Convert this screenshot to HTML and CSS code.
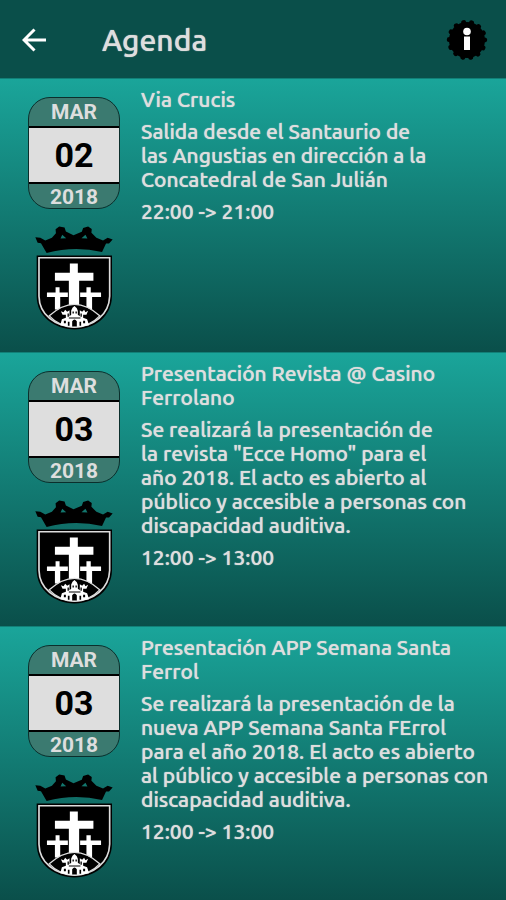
FILE: index.html
```html
<!DOCTYPE html>
<html lang="es">

<head>
    <meta charset="UTF-8">
    <meta name="viewport" content="width=device-width, initial-scale=1.0">
    <title>Agenda</title>
    <link rel="stylesheet" href="styles.css">
</head>

<body>

    <!-- escudo compartido por todos los eventos -->
    <svg class="sprite" aria-hidden="true">
        <symbol id="escudo" viewBox="45 33 235 312">
            <path d="M46 66 L61 68 L76 76 L96 68 L108 54 L107 42 L118 34 L134 37 L138 49 L161 60 L186 50 L190 38 L205 34 L216 41 L215 53 L230 68 L250 76 L264 68 L279 73 L268 85 L259 85 L247 111 Q164 91 80 114 L63 84 L53 83 Z" />
            <path d="M122 70 L127 59 L139 69 Z M185 69 L197 59 L203 70 Z" fill="#12766d" />
            <path d="M50 121 H277 V245 C275 306 225 343 164 344 C102 343 51 305 50 245 Z" />
            <path d="M57 128 H270 V244 C268 300 222 335 164 337 C106 335 58 300 57 244 Z" fill="none" stroke="#ddd" stroke-width="5" />
            <path d="M150 145 H174 V173 H221 V197 H178 V290 H147 V197 H105 V173 H150 Z" fill="#fff" />
            <path d="M107 217 H119 V233 H144 V246 H121 V284 H105 V246 H81 V233 H107 Z M200 217 H213 V233 H244 V246 H217 V284 H200 V246 H181 V233 H200 Z" fill="#fff" />
            <path d="M88 303 Q164 234 240 303 Q210 335 164 337 Q118 335 88 303 Z" stroke="#ddd" stroke-width="4" />
            <path d="M121 331 L126 313 L138 309 V300 H128 L123 289 L131 292 L136 285 L142 291 L149 286 L149 304 L154 300 V287 L158 279 L164 273 L171 280 L174 288 V300 L180 304 V286 L187 291 L193 285 L197 292 L205 288 L200 300 H190 V309 L202 313 L208 331 Q164 342 121 331 Z" fill="#fff" />
            <path d="M157 335 V319 Q164 309 171 319 V335 Z M158 290 H162 V296 H158 Z M167 290 H171 V296 H167 Z M143 296 H147 V306 H143 Z M182 296 H186 V306 H182 Z M132 318 H138 V325 H132 Z M190 318 H196 V325 H190 Z M147 308 H182 V311 H147 Z M144 321 H149 V333 H144 Z M179 321 H184 V333 H179 Z" />
        </symbol>
    </svg>

    <header class="topbar">
        <button type="button" class="icon-btn" aria-label="Volver">
            <svg width="24" height="24" viewBox="0 0 24 24" fill="none" stroke="#fff" stroke-width="3">
                <path d="M12.5 1.5 L2 12 L12.5 22.5 M2 12 H24" />
            </svg>
        </button>
        <h1>Agenda</h1>
        <button type="button" class="icon-btn" aria-label="Información">
            <svg width="42" height="42" viewBox="-21 -21 42 42">
                <circle r="18" />
                <circle r="17.7" fill="none" stroke="#000" stroke-width="5" stroke-linecap="round" stroke-dasharray="0.1 7.844" />
                <circle cy="-8.5" r="3.8" fill="#fff" />
                <path d="M-3 -3.5 H3 V10 H-3 Z" fill="#fff" />
            </svg>
        </button>
    </header>

    <main>
        <article class="event">
            <div class="side">
                <time class="calendar" datetime="2018-03-02">
                    <span class="month">MAR</span>
                    <span class="day">02</span>
                    <span class="year">2018</span>
                </time>
                <svg class="shield"><use href="#escudo" /></svg>
            </div>
            <div class="info">
                <h2>Via Crucis</h2>
                <p>Salida desde el Santaurio de<br>las Angustias en dirección a la<br>Concatedral de San Julián</p>
                <p class="hours">22:00 -&gt; 21:00</p>
            </div>
        </article>

        <article class="event">
            <div class="side">
                <time class="calendar" datetime="2018-03-03">
                    <span class="month">MAR</span>
                    <span class="day">03</span>
                    <span class="year">2018</span>
                </time>
                <svg class="shield"><use href="#escudo" /></svg>
            </div>
            <div class="info">
                <h2>Presentación Revista @ Casino<br>Ferrolano</h2>
                <p>Se realizará la presentación de<br>la revista "Ecce Homo" para el<br>año 2018. El acto es abierto al<br>público y accesible a personas con<br>discapacidad auditiva.</p>
                <p class="hours">12:00 -&gt; 13:00</p>
            </div>
        </article>

        <article class="event">
            <div class="side">
                <time class="calendar" datetime="2018-03-03">
                    <span class="month">MAR</span>
                    <span class="day">03</span>
                    <span class="year">2018</span>
                </time>
                <svg class="shield"><use href="#escudo" /></svg>
            </div>
            <div class="info">
                <h2>Presentación APP Semana Santa<br>Ferrol</h2>
                <p>Se realizará la presentación de la<br>nueva APP Semana Santa FErrol<br>para el año 2018. El acto es abierto<br>al público y accesible a personas con<br>discapacidad auditiva.</p>
                <p class="hours">12:00 -&gt; 13:00</p>
            </div>
        </article>
    </main>

</body>

</html>
```
FILE: styles.css
```css
* {
    margin: 0;
    padding: 0;
    box-sizing: border-box;
}

body {
    background: #0a4f4a;
    color: #dedede;
    font-family: Ubuntu, "Noto Sans", sans-serif;
}

.sprite {
    display: none;
}

.topbar {
    display: flex;
    align-items: center;
    height: 78px;
    padding: 2px 18px 0 22px;
    background: #0a4f4a;
}

.topbar h1 {
    flex: 1;
    margin-left: 56px;
    font-size: 30px;
    font-weight: 500;
    line-height: 40px;
    text-shadow: 0 0 1px #dedede;
}

.icon-btn {
    display: flex;
    border: none;
    background: none;
    cursor: pointer;
}

.event {
    display: flex;
    gap: 21px;
    padding: 8px 8px 22px 28px;
    border-top: 1px solid #128078;
    background: linear-gradient(#1aa59a, #0a4f4a);
}

.side {
    display: flex;
    flex-direction: column;
    align-items: center;
    gap: 17px;
    padding-top: 10px;
}

.calendar {
    display: flex;
    flex-direction: column;
    width: 92px;
    height: 112px;
    border: 1px solid #0b2f2c;
    border-radius: 22px;
    overflow: hidden;
    background: #3b7a70;
    font-family: Roboto, sans-serif;
    font-size: 21px;
    font-weight: 700;
    text-align: center;
}

.month {
    line-height: 28px;
}

.day {
    flex: 1;
    border-top: 2px solid #000;
    border-bottom: 2px solid #000;
    background: #dedede;
    color: #000;
    font-size: 34px;
    line-height: 54px;
}

.year {
    line-height: 26px;
}

.shield {
    width: 78px;
    height: 104px;
}

.info {
    flex: 1;
    display: flex;
    flex-direction: column;
    gap: 8px;
    font-size: 21px;
    line-height: 24px;
    text-shadow: 0 0 1px #dedede;
}

.info h2 {
    font-size: 21px;
    font-weight: 500;
}

.info p {
    font-weight: 500;
    white-space: nowrap;
}
```
